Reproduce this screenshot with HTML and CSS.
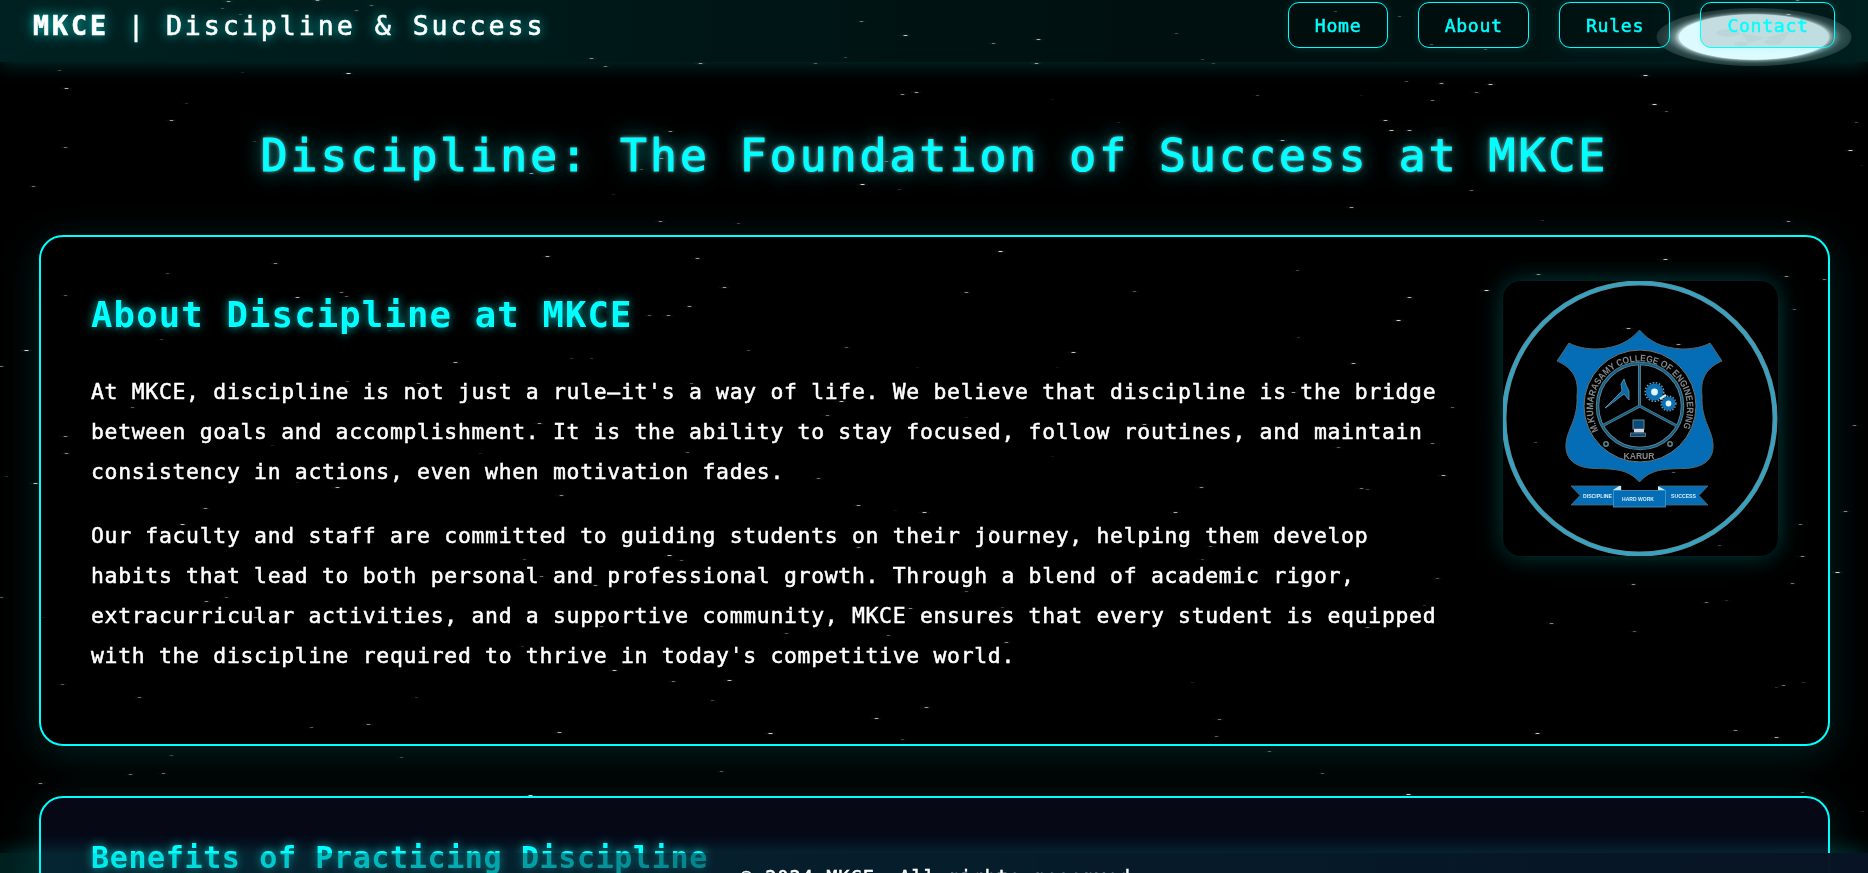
FILE: index.html
```html
<!DOCTYPE html>
<html lang="en">
<head>
<meta charset="utf-8">
<title>MKCE | Discipline &amp; Success</title>
<link rel="stylesheet" href="styles.css">
</head>
<body>
<canvas class="sky" id="sky" width="1868" height="873"></canvas>

<svg class="moon" viewBox="0 0 210 74" width="210" height="74">
  <defs>
    <radialGradient id="halo">
      <stop offset="0.76" stop-color="#ffffff" stop-opacity="0.95"/>
      <stop offset="0.82" stop-color="#d4dcdc" stop-opacity="0.55"/>
      <stop offset="0.9" stop-color="#a0a8a8" stop-opacity="0.34"/>
      <stop offset="1" stop-color="#8a9090" stop-opacity="0.26"/>
    </radialGradient>
  </defs>
  <ellipse cx="105" cy="37" rx="97.5" ry="29" fill="url(#halo)"/>
  <ellipse cx="105" cy="37" rx="75" ry="22.7" fill="#f6fbff"/>
  <g fill="#edf3f6">
    <ellipse cx="79" cy="33" rx="12" ry="3.7"/>
    <ellipse cx="92" cy="44" rx="7" ry="2.3"/>
    <ellipse cx="124" cy="42" rx="9" ry="2.7"/>
    <path d="M92 33 L116 38 L141 31 L134 41 L116 38 L100 43Z"/>
  </g>
</svg>

<header class="topbar">
  <div class="logo"><b>MKCE</b> | Discipline &amp; Success</div>
  <nav class="nav">
    <a class="nav-link">Home</a>
    <a class="nav-link">About</a>
    <a class="nav-link">Rules</a>
    <a class="nav-link">Contact</a>
  </nav>
</header>

<main class="page">
  <h1 class="title">Discipline: The Foundation of Success at MKCE</h1>

  <section class="card about">
    <div class="about-text">
      <h2 class="heading">About Discipline at MKCE</h2>
      <p>At MKCE, discipline is not just a rule—it's a way of life. We believe that discipline is the bridge between goals and accomplishment. It is the ability to stay focused, follow routines, and maintain consistency in actions, even when motivation fades.</p>
      <p>Our faculty and staff are committed to guiding students on their journey, helping them develop habits that lead to both personal and professional growth. Through a blend of academic rigor, extracurricular activities, and a supportive community, MKCE ensures that every student is equipped with the discipline required to thrive in today's competitive world.</p>
    </div>
    <svg class="emblem" viewBox="0 0 275 275" width="275" height="275">
      <defs>
        <path id="arc" d="M95.5 149.5 A47 47 0 1 1 178.5 149.5"/>
      </defs>
      <circle cx="136.5" cy="137.5" r="135.5" fill="none" stroke="#5f8c96" stroke-width="5"/>
      <circle cx="136.5" cy="137.5" r="135.5" fill="none" stroke="#35a3c4" stroke-width="3"/>
      <path d="M136.5 49 C127 60 115 67 94 68 C83 68 73 66 66 62 L54 80 C70 87 76 98 74 115 C75 139 64 148 63 163 C62 178 72 187 92 187.500 C112 188 125 188 136.500 201 C148 188 161 188 181 187.500 C201 187 211 178 210 163 C209 148 198 139 199 115 C197 98 203 87 219 80 L207 62 C200 66 190 68 179 68 C158 67 146 60 136.500 49Z" fill="#056cb6" stroke="#51686f" stroke-width="1"/>
      <circle cx="137" cy="125" r="56" fill="#000" stroke="#6d7470" stroke-width="1"/>
      <circle cx="137" cy="125" r="42.500" fill="none" stroke="#5a8490" stroke-width="3.500"/>
      <circle cx="137" cy="125" r="42.500" fill="none" stroke="#155f86" stroke-width="1.800"/>
      <g fill="none" stroke="#5a8490" stroke-width="3"><path d="M136.500 83 V125 L99 145 M136.500 125 L174 145"/></g>
      <g fill="none" stroke="#155f86" stroke-width="1.500"><path d="M136.500 83 V125 L99 145 M136.500 125 L174 145"/></g>
      <text class="seal-text"><textPath href="#arc" textLength="190" lengthAdjust="spacingAndGlyphs">M.KUMARASAMY COLLEGE OF ENGINEERING</textPath></text>
      <text class="seal-text" x="136" y="178" text-anchor="middle" textLength="31" lengthAdjust="spacingAndGlyphs">KARUR</text>
      <circle cx="103" cy="163" r="2.200" fill="none" stroke="#5c8a92" stroke-width="1.500"/>
      <circle cx="167" cy="163" r="2.200" fill="none" stroke="#5c8a92" stroke-width="1.500"/>
      <path d="M102 127 L119 110 L118 103 L121 98 L123 104 L126 110 L126 119 L121 113 L104 126Z" fill="#0d6aa8" stroke="#5e98aa" stroke-width=".8"/>
      <circle cx="151.500" cy="111" r="8.600" fill="#0d6fb4"/>
      <circle cx="151.500" cy="111" r="9.300" fill="none" stroke="#5f9dbd" stroke-width="1.500" stroke-dasharray="1.600 1.600"/>
      <circle cx="151.500" cy="111" r="3.400" fill="#dff8ff"/>
      <path d="M157 118 L163 114" stroke="#cbeef5" stroke-width="2.500"/>
      <circle cx="165.500" cy="122.500" r="6.800" fill="#0d6fb4"/>
      <circle cx="165.500" cy="122.500" r="7.400" fill="none" stroke="#5f9dbd" stroke-width="1.400" stroke-dasharray="1.500 1.500"/>
      <circle cx="165.500" cy="122.500" r="2.900" fill="#dff8ff"/>
      <rect x="130" y="139" width="11" height="9" fill="#0b4a78" stroke="#5d8794" stroke-width="1"/>
      <rect x="131" y="148" width="10" height="3.500" fill="#d8d4e0"/>
      <rect x="127.500" y="152" width="15" height="3.500" fill="#0b4a78" stroke="#5d8794" stroke-width=".8"/>
      <path d="M68 205 H118 V224 H68 L77 214.500Z M156 205 H205 L196 214.500 L205 224 H156Z" fill="#056cb6" stroke="#51686f" stroke-width=".8"/>
      <path d="M110 209 L116 205 H118 V209Z M155 205 L162 209 H155Z" fill="#c5eaf2"/>
      <rect x="110.500" y="209.500" width="52" height="16.500" fill="#056cb6" stroke="#4b9cc5" stroke-width=".8"/>
      <g class="motto">
        <text x="80" y="216.500" textLength="29" lengthAdjust="spacingAndGlyphs">DISCIPLINE</text>
        <text x="119" y="220" textLength="32" lengthAdjust="spacingAndGlyphs">HARD WORK</text>
        <text x="168" y="216.500" textLength="25" lengthAdjust="spacingAndGlyphs">SUCCESS</text>
      </g>
    </svg>
  </section>

  <section class="card benefits">
    <h2 class="heading heading-small">Benefits of Practicing Discipline</h2>
  </section>
</main>

<footer class="footer">© 2024 MKCE. All rights reserved.</footer>
<script src="stars.js"></script>
</body>
</html>
```
FILE: styles.css
```css
* { box-sizing: border-box; }

html, body {
  margin: 0;
  height: 100%;
  overflow: hidden;
}

body {
  background: #000;
  color: #fff;
  font-family: "DejaVu Sans Mono", monospace;
}

.sky {
  position: fixed;
  top: 0;
  left: 0;
  z-index: -2;
}

.moon {
  position: fixed;
  top: 0;
  right: 9px;
  z-index: -1;
}

.topbar {
  display: flex;
  justify-content: space-between;
  align-items: flex-start;
  height: 62px;
  padding: 2px 33px 0;
  background: linear-gradient(90deg, rgba(0, 255, 255, 0.13), rgba(0, 255, 255, 0.06) 65%, rgba(0, 255, 255, 0.07) 80%, rgba(0, 255, 255, 0.12));
  box-shadow: 0 2px 20px rgba(0, 255, 255, 0.2);
}

.logo {
  font-size: 26.6px;
  line-height: 48px;
  letter-spacing: 2.97px;
  -webkit-text-stroke: 0.6px #fff;
  text-shadow: 0 0 10px #00b4b4, 0 0 18px rgba(0, 255, 255, 0.4);
}

.nav {
  display: flex;
  gap: 30px;
}

.nav-link {
  height: 46px;
  padding: 0 25.4px 0 26px;
  border: 1px solid #00ffff;
  border-radius: 11px;
  background: rgba(0, 0, 0, 0.12);
  box-shadow: 0 0 8px rgba(0, 255, 255, 0.15);
  color: #00ffff;
  font-size: 18.2px;
  line-height: 45px;
  letter-spacing: 0.65px;
  -webkit-text-stroke: 0.5px #00ffff;
}

.page {
  padding: 0 38px 0 39px;
}

.title {
  margin: 63px 0 47px;
  color: #00ffff;
  font-size: 44.6px;
  font-weight: 400;
  line-height: 62px;
  height: 63px;
  letter-spacing: 3.1px;
  text-align: center;
  -webkit-text-stroke: 1.1px #00ffff;
  text-shadow: 0 0 4px rgba(255, 255, 255, 0.7), 0 0 20px #00b4b4;
}

.card {
  border: 2px solid #00ffff;
  border-radius: 24px;
  box-shadow: 0 8px 40px rgba(0, 255, 255, 0.13);
}

.about {
  display: flex;
  justify-content: space-between;
  height: 511px;
  margin-bottom: 50px;
  padding: 44px 50px;
}

.about-text {
  width: 1362px;
  font-size: 21.4px;
  line-height: 40px;
  letter-spacing: 0.71px;
  -webkit-text-stroke: 0.5px #fff;
}

.about-text p {
  margin: 0 0 24px;
}

.heading {
  margin: 10px 0 33px;
  color: #00ffff;
  font-size: 35.6px;
  line-height: 48px;
  letter-spacing: 1.15px;
  text-shadow: 0 0 10px #00b4b4;
  -webkit-text-stroke: 0;
}

.emblem {
  flex: none;
  border-radius: 18px;
  box-shadow: 0 0 24px rgba(0, 255, 255, 0.25);
}

.seal-text {
  fill: #83898a;
  font: bold 9.5px "Liberation Sans", sans-serif;
  letter-spacing: 0;
}

.motto {
  fill: #d5eef8;
  font: bold 5.5px "Liberation Sans", sans-serif;
}

.benefits {
  height: 400px;
  padding: 36px 50px;
  background: rgba(6, 9, 24, 0.93);
}

.heading-small {
  margin: 0;
  font-size: 30px;
  letter-spacing: 0.63px;
}

.footer {
  position: fixed;
  right: 0;
  bottom: 0;
  left: 0;
  height: 20px;
  padding: 13px 0 0 16px;
  background: linear-gradient(90deg, rgba(0, 255, 255, 0.12), rgba(8, 14, 32, 0.95) 130%), linear-gradient(90deg, transparent, rgba(6, 10, 24, 0.96));
  box-shadow: 0 -2px 20px rgba(0, 255, 255, 0.2);
  font-size: 18.6px;
  line-height: 23px;
  letter-spacing: 1px;
  text-align: center;
  -webkit-text-stroke: 0.5px #fff;
}
```
FILE: stars.js
```js
// Each star: x, y, brightness
const stars = [
  [228,1,.7],[317,0,.7],[371,5,.4],[222,8,.3],[356,10,.4],[240,14,.3],[591,58,.6],[605,66,.5],[59,70,.3],[348,73,1],
  [242,72,.15],[66,88,.8],[186,103,.2],[171,120,.7],[65,147,.5],[33,186,.5],[254,141,.2],[531,173,.7],[552,164,.4],[613,194,.15],
  [861,21,.5],[905,35,.9],[993,43,.5],[1038,39,.8],[1176,33,.3],[700,63,.7],[815,63,.4],[845,57,.25],[1036,63,.7],[1202,59,.25],
  [1213,63,.25],[902,94,.6],[916,92,.7],[1052,99,.1],[670,131,.6],[1118,122,.15],[661,158,.6],[641,169,.3],[886,161,.5],[1032,150,.4],
  [1170,138,.3],[862,184,1],[899,189,.2],[660,221,.6],[738,223,.3],[1335,11,.3],[1399,16,.3],[1431,44,.4],[1485,49,.3],[1797,0,.5],
  [1788,14,1],[1406,81,.35],[1441,83,.7],[1490,84,.9],[1476,92,.5],[1432,100,.5],[1257,95,.3],[1361,95,.1],[1645,75,1],[1654,104,1],
  [1666,111,.35],[1385,120,.8],[1391,130,.9],[1409,130,.8],[1282,140,.8],[1856,122,.3],[1850,150,1],[1861,165,.1],[1471,190,.45],[1351,207,.7],
  [1542,220,.2],[1788,221,.6],[1403,160,.3],[275,263,.6],[547,256,.8],[167,273,.3],[65,295,.4],[297,297,.8],[341,292,.5],[346,296,.4],
  [26,350,1],[1,366,.5],[161,339,.25],[389,330,.2],[455,362,.8],[571,358,.2],[591,358,.2],[347,381,.3],[418,383,.6],[132,407,.4],
  [65,436,.6],[66,453,.6],[539,423,.7],[272,445,.15],[480,453,.15],[6,476,.2],[35,483,.9],[337,487,.8],[297,482,.15],[561,495,.6],
  [205,508,.6],[182,524,.9],[524,559,.3],[541,576,.5],[595,585,.6],[226,597,.4],[206,601,.6],[1,597,.4],[255,617,.5],[601,626,.4],
  [614,670,.9],[522,646,.2],[62,684,.4],[139,697,.5],[416,697,.2],[368,724,.6],[311,727,.4],[559,732,.8],[171,755,.3],[401,757,.3],
  [43,617,.1],[697,258,.7],[1000,251,1],[724,287,.7],[966,292,.6],[1134,291,.4],[689,306,.7],[649,315,.4],[668,315,.6],[748,350,.3],
  [846,347,.4],[1073,352,.9],[917,367,.1],[1057,367,.1],[691,383,.4],[841,401,.9],[827,415,.5],[966,417,.15],[1144,424,.7],[687,452,.4],
  [1052,456,.1],[818,478,.5],[1201,487,.6],[858,505,.7],[895,510,.1],[924,512,.9],[1175,512,.8],[992,530,.6],[858,547,.5],[669,555,.9],
  [681,560,.4],[1210,546,.4],[1202,559,.3],[966,591,.4],[910,608,.6],[1002,607,.3],[786,633,.4],[888,635,.4],[1006,642,.6],[673,681,.5],
  [729,680,.9],[712,700,.3],[926,707,.7],[876,718,.8],[770,733,1],[902,739,.3],[1219,719,.5],[1216,736,.4],[1192,682,.15],[1297,270,.3],
  [1665,259,.9],[1538,274,.6],[1786,276,.6],[1824,279,.5],[1486,290,1],[1409,297,.8],[1398,320,1],[1298,337,.2],[1794,309,.4],[1353,363,.8],
  [1628,328,.8],[1678,344,.7],[1618,374,.8],[1293,392,.7],[1452,407,.4],[1432,443,.5],[1338,447,.4],[1535,442,.3],[1653,440,.6],[1854,425,.5],
  [1443,475,.8],[1361,488,.5],[1367,489,.3],[1673,472,.4],[1845,511,.6],[1800,524,.5],[1719,545,.3],[1802,556,.6],[1837,572,1],[1633,584,.6],
  [1792,583,.5],[1437,578,.4],[1706,602,.5],[1726,600,.2],[1424,605,.2],[1551,623,.6],[1634,631,.4],[1367,627,.5],[1783,685,.5],[1776,687,.2],
  [1803,682,.2],[1537,733,.9],[1735,730,.6],[1776,737,.8],[1269,751,.4],[130,774,.5],[163,773,.5],[40,783,.6],[721,771,.4],[530,795,1],
  [1322,773,.4],[1408,794,1],[1802,792,.4],[1862,811,.2]
];

const ctx = document.getElementById("sky").getContext("2d");
for (const [x, y, b] of stars) {
  ctx.fillStyle = `rgba(255,255,255,${b * 0.05})`;
  ctx.beginPath();
  ctx.ellipse(x, y + 0.5, 6, 1.5, 0, 0, Math.PI * 2);
  ctx.fill();
  ctx.fillStyle = `rgba(255,255,255,${b * b * 0.4})`;
  ctx.fillRect(x - 2, y, 5, 1);
  ctx.fillStyle = `rgba(255,255,255,${b * 0.7})`;
  ctx.fillRect(x - 1, y, 3, 1);
}
```
